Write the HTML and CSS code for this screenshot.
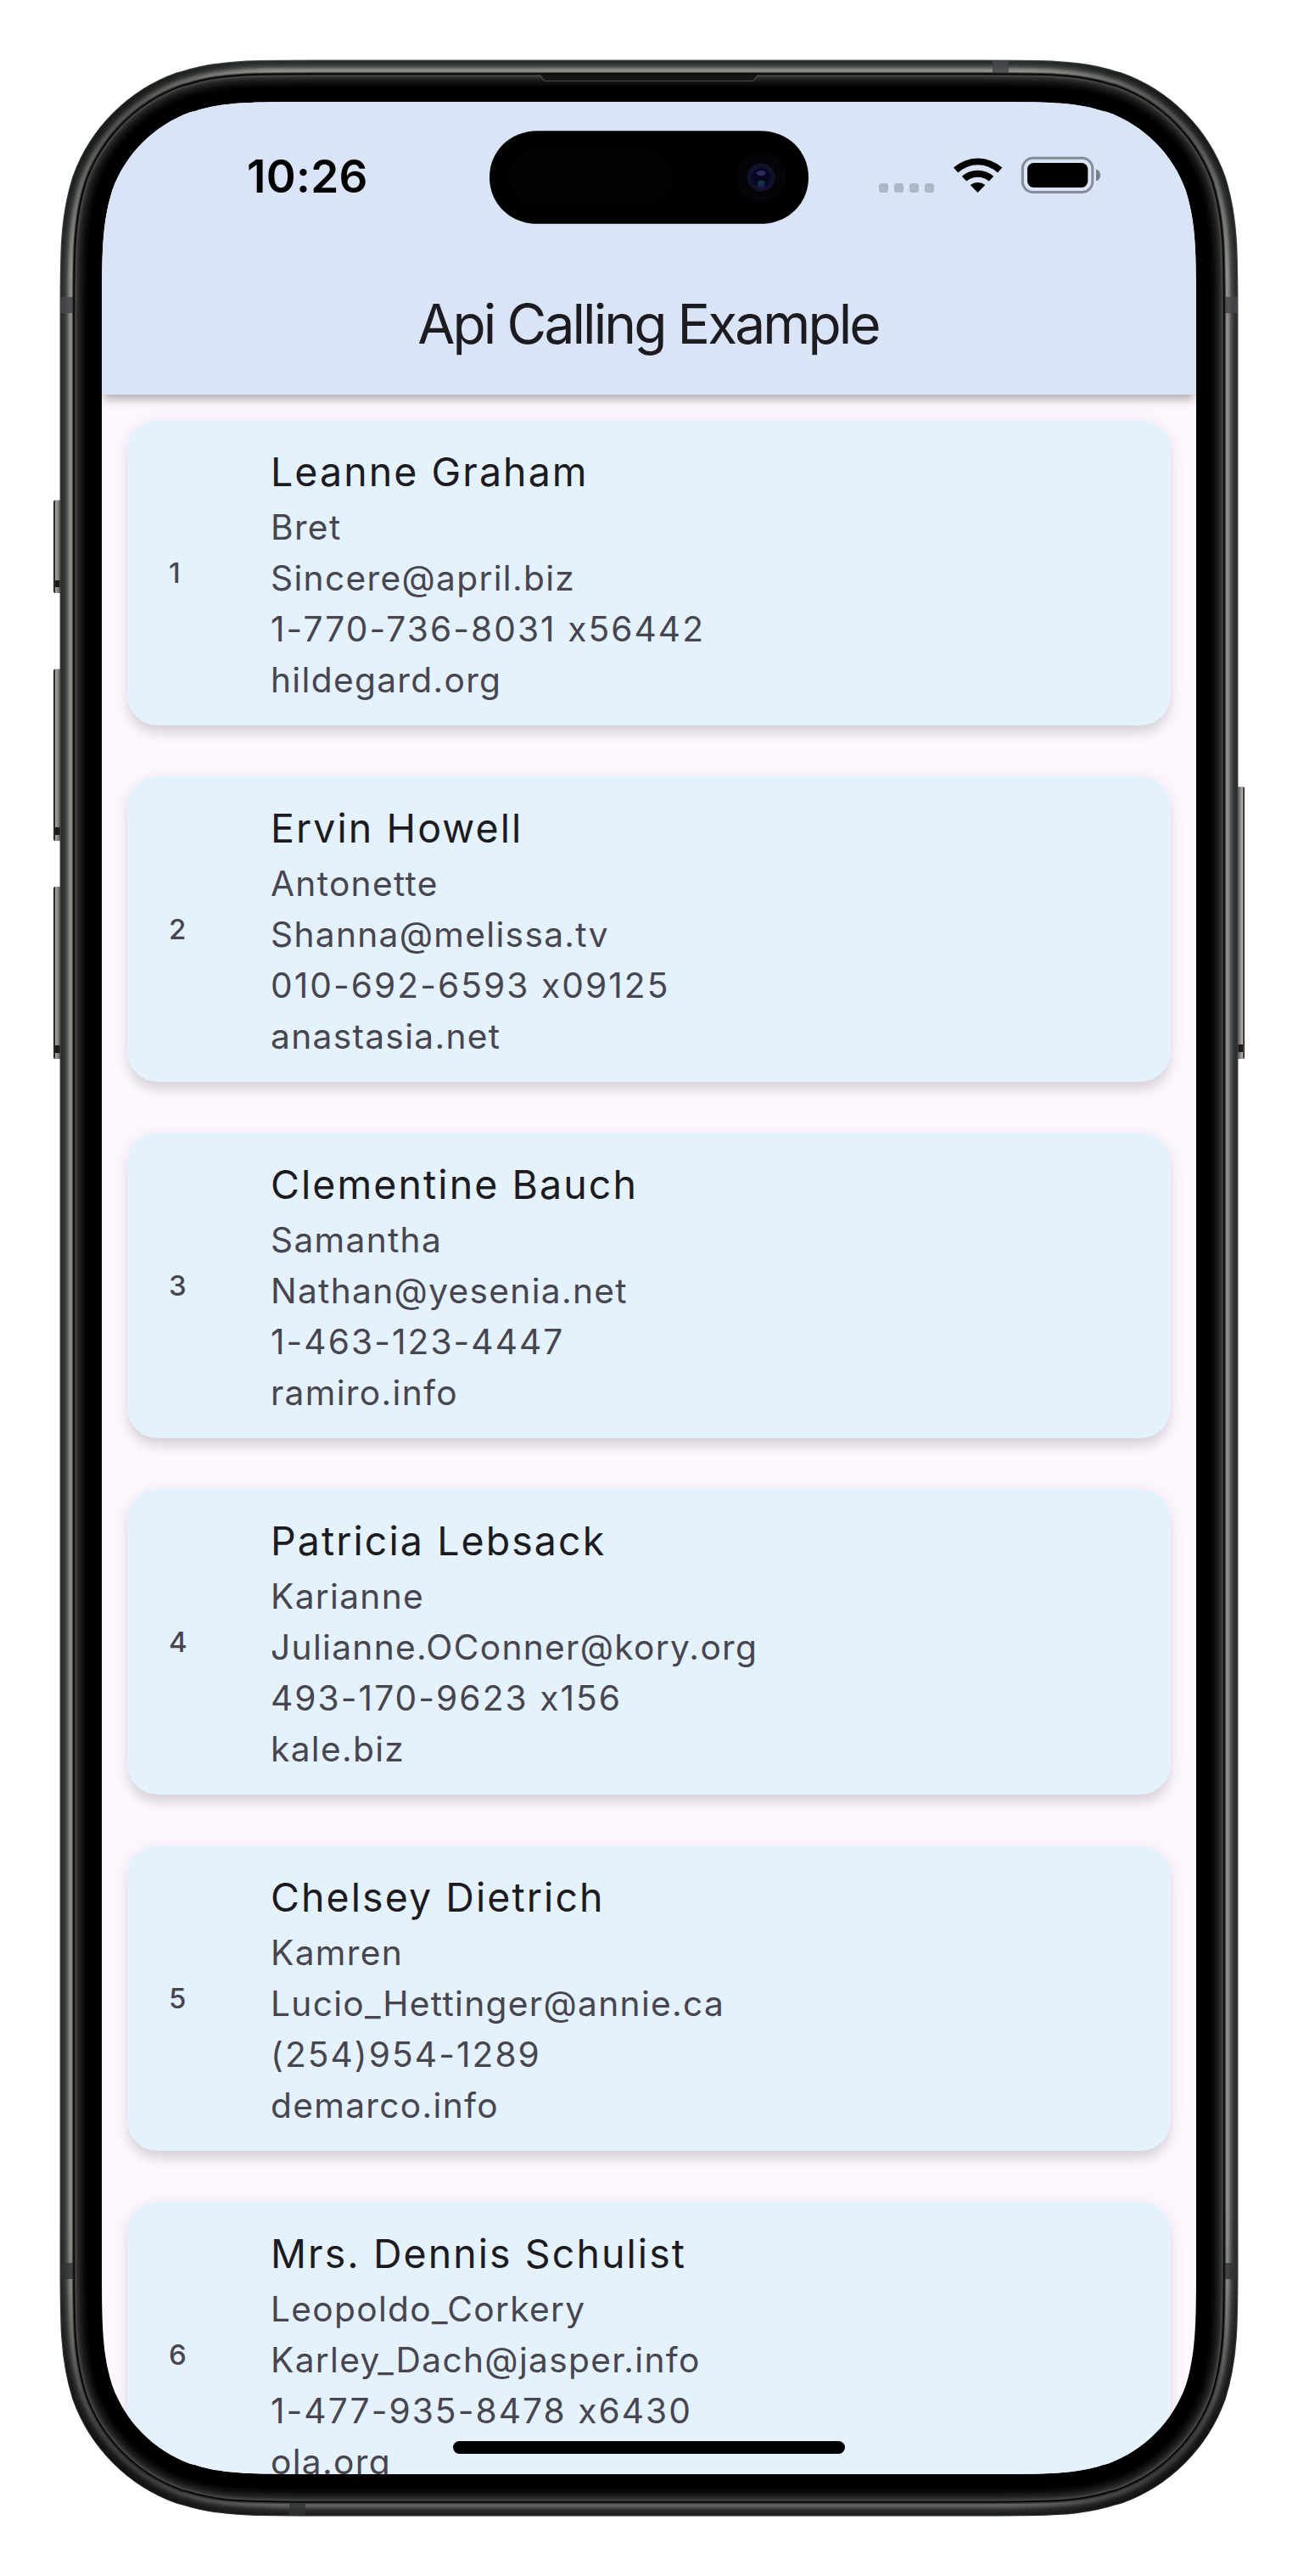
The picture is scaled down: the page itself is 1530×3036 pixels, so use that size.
FILE: index.html
```html
<!DOCTYPE html>
<html lang="en">
<head>
<meta charset="utf-8">
<title>Api Calling Example</title>
<link rel="stylesheet" href="styles.css">
</head>
<body>
<div class="device">
  <svg class="frame" viewBox="0 0 1530 3036" aria-hidden="true">
    <defs>
      <path id="outline" d="M372.23 120H1157.77C1230.4 120 1266.71 120 1299.46 130.81L1305.8 132.36C1348.48 147.89 1382.11 181.52 1397.64 224.2C1410 263.29 1410 299.6 1410 372.23V2663.77C1410 2736.4 1410 2772.71 1397.64 2811.8C1382.11 2854.48 1348.48 2888.11 1305.8 2903.64L1299.46 2905.19C1266.71 2916 1230.4 2916 1157.77 2916H372.23C299.6 2916 263.29 2916 230.54 2905.19L224.2 2903.64C181.52 2888.11 147.89 2854.48 132.36 2811.8C120 2772.71 120 2736.4 120 2663.77V372.23C120 299.6 120 263.29 132.36 224.2C147.89 181.52 181.52 147.89 224.2 132.36L230.54 130.81C263.29 120 299.6 120 372.23 120Z"/>
      <radialGradient id="tl" gradientUnits="userSpaceOnUse" cx="115" cy="115" r="210"><stop offset=".2" stop-opacity=".42"/><stop offset="1" stop-opacity="0"/></radialGradient>
      <radialGradient id="tr" gradientUnits="userSpaceOnUse" cx="1415" cy="115" r="210"><stop offset=".2" stop-opacity=".42"/><stop offset="1" stop-opacity="0"/></radialGradient>
      <radialGradient id="bl" gradientUnits="userSpaceOnUse" cx="115" cy="2921" r="230"><stop offset=".2" stop-opacity=".45"/><stop offset="1" stop-opacity="0"/></radialGradient>
      <radialGradient id="br" gradientUnits="userSpaceOnUse" cx="1415" cy="2921" r="230"><stop offset=".2" stop-opacity=".45"/><stop offset="1" stop-opacity="0"/></radialGradient>
      <linearGradient id="low" gradientUnits="userSpaceOnUse" x1="0" y1="2600" x2="0" y2="2960"><stop offset="0" stop-opacity="0"/><stop offset="1" stop-opacity=".32"/></linearGradient>
      <linearGradient id="key" x1="0" y1="0" x2="1" y2="0"><stop offset="0" stop-color="#2b2a28"/><stop offset=".15" stop-color="#2b2a28"/><stop offset=".22" stop-color="#a3a19c"/><stop offset=".5" stop-color="#8b8984"/><stop offset="1" stop-color="#32312f"/></linearGradient>
      <linearGradient id="keyr" x1="1" y1="0" x2="0" y2="0"><stop offset="0" stop-color="#2b2a28"/><stop offset=".13" stop-color="#2b2a28"/><stop offset=".22" stop-color="#b5b3ae"/><stop offset=".5" stop-color="#8b8984"/><stop offset="1" stop-color="#32312f"/></linearGradient>
    </defs>
    <g class="keys">
      <rect x="63" y="589.5" width="10" height="109.5" rx="2" fill="url(#key)"/>
      <rect x="63" y="788.5" width="10" height="202.5" rx="2" fill="url(#key)"/>
      <rect x="63" y="1045" width="10" height="203" rx="2" fill="url(#key)"/>
      <rect x="1457" y="927.3" width="10" height="320.7" rx="2" fill="url(#keyr)"/>
      <path d="M65 684h6v8h-6zM65 975h6v9h-6zM65 1232h6v9h-6zM1459 1231h6v9h-6z" fill="#1d1c1b"/>
    </g>
    <g fill="none">
      <use href="#outline" stroke="#4c4f4f" stroke-width="99"/>
      <use href="#outline" stroke="#292d2f" stroke-width="97"/>
      <use href="#outline" stroke="#303435" stroke-width="92"/>
      <use href="#outline" stroke="#3e4142" stroke-width="88"/>
      <use href="#outline" stroke="#505151" stroke-width="84"/>
      <use href="#outline" stroke="#6c6b69" stroke-width="81"/>
      <use href="#outline" stroke="#878581" stroke-width="78"/>
      <use href="#outline" stroke="#94928d" stroke-width="74"/>
      <use href="#outline" stroke="#6b6a68" stroke-width="70.5"/>
      <use href="#outline" stroke="url(#tl)" stroke-width="99"/>
      <use href="#outline" stroke="url(#tr)" stroke-width="99"/>
      <use href="#outline" stroke="url(#bl)" stroke-width="99"/>
      <use href="#outline" stroke="url(#br)" stroke-width="99"/>
      <use href="#outline" stroke="url(#low)" stroke-width="99"/>
      <path d="M71 359.5h15M1444 359.5h15M1179.5 71v15" stroke="#45484b" stroke-opacity=".85" stroke-width="19"/>
      <path d="M71 2676.5h15M1444 2676.5h15M350.5 2950v15" stroke="#303335" stroke-opacity=".8" stroke-width="19"/>
      <use href="#outline" stroke="#2c2c2c" stroke-width="69"/>
      <use href="#outline" stroke="#060606" stroke-width="67"/>
      <use href="#outline" stroke="#444" stroke-width="63.5"/>
      <use href="#outline" stroke="#343434" stroke-width="60"/>
      <use href="#outline" stroke="#272727" stroke-width="57"/>
      <use href="#outline" stroke="#1d1d1d" stroke-width="53"/>
      <use href="#outline" stroke="#141414" stroke-width="49"/>
      <use href="#outline" stroke="#0b0b0b" stroke-width="44"/>
      <use href="#outline" stroke="#050505" stroke-width="39"/>
      <use href="#outline" stroke="#000" stroke-width="34"/>
    </g>
    <path d="M636 88.500C640 88.500 638 95.500 644 95.500H886C892 95.500 890 88.500 894 88.500" fill="#161616" stroke="#4b4b4b" stroke-width="1.200"/>
    <path d="M637 87.500H893" stroke="#0b0b0b" stroke-width="2.500"/>
  </svg>

  <main class="screen">
    <header class="appbar">
      <div class="status">
        <span class="clock">10:26</span>
        <svg class="indicators" viewBox="1030 180 270 52" width="270" height="52" aria-hidden="true">
          <g fill="#adb7c5"><rect x="1036" y="216" width="11" height="11" rx="3"/><rect x="1054" y="216" width="11" height="11" rx="3"/><rect x="1072" y="216" width="11" height="11" rx="3"/><rect x="1090" y="216" width="11" height="11" rx="3"/></g>
          <path d="M1124 197.500A43 43 0 0 1 1181.300 197.500L1176 203.400A34.500 34.500 0 0 0 1129.300 203.400ZM1133.800 207.800A28 28 0 0 1 1171.200 207.800L1165.800 213.600A20.500 20.500 0 0 0 1139.200 213.600ZM1143.700 218A14 14 0 0 1 1161.300 218L1152.500 227Z"/>
          <rect x="1205.300" y="186.300" width="82.500" height="40.200" rx="12.500" fill="none" stroke="#858c98" stroke-width="3"/>
          <rect x="1211" y="192" width="71.300" height="29" rx="7.500"/>
          <path d="M1292 199.500C1295 200.500 1297 203 1297 206.500C1297 210 1295 212.500 1292 213.500Z" fill="#767d87"/>
        </svg>
        <svg class="island" viewBox="0 0 377 110" aria-hidden="true">
          <path d="M57 0H320C353 0 377 24 377 55S353 110 320 110H57C24 110 0 86 0 55S24 0 57 0Z"/>
          <rect x="23" y="22" width="194" height="66" rx="33" fill="#030303"/>
          <circle cx="321" cy="55" r="30" fill="#060408"/>
          <circle cx="321" cy="55" r="16.300" fill="#12132a"/>
          <circle cx="321" cy="55" r="11.500" fill="#05051c" stroke="#0c0c38" stroke-width="2"/>
          <ellipse cx="321" cy="50" rx="5.500" ry="3" fill="#2b2d60"/>
          <ellipse cx="321" cy="62" rx="4.500" ry="3.500" fill="#0e363d"/>
          <path d="M317 65.500Q321 68 325 65.500" stroke="#3c1064" stroke-width="2" fill="none"/>
        </svg>
      </div>
      <h1 class="title">Api Calling Example</h1>
    </header>

    <ul class="users">
      <li class="card"><span class="index">1</span><div class="info"><h2>Leanne Graham</h2><p>Bret</p><p>Sincere@april.biz</p><p class="phone">1-770-736-8031 x56442</p><p>hildegard.org</p></div></li>
      <li class="card"><span class="index">2</span><div class="info"><h2>Ervin Howell</h2><p>Antonette</p><p>Shanna@melissa.tv</p><p class="phone">010-692-6593 x09125</p><p>anastasia.net</p></div></li>
      <li class="card"><span class="index">3</span><div class="info"><h2>Clementine Bauch</h2><p>Samantha</p><p>Nathan@yesenia.net</p><p class="phone">1-463-123-4447</p><p>ramiro.info</p></div></li>
      <li class="card"><span class="index">4</span><div class="info"><h2>Patricia Lebsack</h2><p>Karianne</p><p>Julianne.OConner@kory.org</p><p class="phone">493-170-9623 x156</p><p>kale.biz</p></div></li>
      <li class="card"><span class="index">5</span><div class="info"><h2>Chelsey Dietrich</h2><p>Kamren</p><p>Lucio_Hettinger@annie.ca</p><p class="phone">(254)954-1289</p><p>demarco.info</p></div></li>
      <li class="card"><span class="index">6</span><div class="info"><h2>Mrs. Dennis Schulist</h2><p>Leopoldo_Corkery</p><p>Karley_Dach@jasper.info</p><p class="phone">1-477-935-8478 x6430</p><p>ola.org</p></div></li>
    </ul>
    <div class="home-indicator"></div>
  </main>
</div>
</body>
</html>
```
FILE: styles.css
```css
* { box-sizing: border-box; }

body {
  margin: 0;
  background: #fff;
  font-family: Inter, "Liberation Sans", sans-serif;
  font-variant-ligatures: no-contextual;
  color: #1d1b20;
}

h1, h2, p, ul {
  margin: 0;
  padding: 0;
  font-weight: 400;
}

.device {
  position: relative;
  width: 1530px;
  height: 3036px;
  padding: 120px;
}

.frame {
  position: absolute;
  inset: 0;
  width: 100%;
  height: 100%;
}

.screen {
  position: relative;
  width: 1290px;
  height: 2796px;
  overflow: hidden;
  background: #fef7ff;
  clip-path: path("M252.23 0H1037.77C1110.4 0 1146.71 0 1179.46 10.81L1185.8 12.36C1228.48 27.89 1262.11 61.52 1277.64 104.2C1290 143.29 1290 179.6 1290 252.23V2543.77C1290 2616.4 1290 2652.71 1277.64 2691.8C1262.11 2734.48 1228.48 2768.11 1185.8 2783.64L1179.46 2785.19C1146.71 2796 1110.4 2796 1037.77 2796H252.23C179.6 2796 143.29 2796 110.54 2785.19L104.2 2783.64C61.52 2768.11 27.89 2734.48 12.36 2691.8C0 2652.71 0 2616.4 0 2543.77V252.23C0 179.6 0 143.29 12.36 104.2C27.89 61.52 61.52 27.89 104.2 12.36L110.54 10.81C143.29 0 179.6 0 252.23 0Z");
}

.appbar {
  position: relative;
  z-index: 1;
  height: 345px;
  background: #d9e4f6;
  box-shadow: 0 8px 9px -3px rgba(0, 0, 0, .22), 0 5px 16px rgba(0, 0, 0, .13);
}

.status {
  position: relative;
  display: flex;
  align-items: center;
  justify-content: space-between;
  height: 172px;
  padding: 0 110px 0 171px;
}

.clock {
  padding-top: 3px;
  font-size: 53px;
  font-weight: 600;
  line-height: 64px;
  letter-spacing: .3px;
  color: #000;
}

.indicators { display: block; }

.island {
  position: absolute;
  left: 457px;
  top: 34px;
  width: 376px;
  height: 110px;
}

.title {
  padding: 6px 2px 0 0;
  font-size: 64px;
  line-height: 168px;
  letter-spacing: -2.9px;
  text-align: center;
}

.users {
  display: flex;
  flex-direction: column;
  gap: 60px;
  padding: 30px;
  list-style: none;
}

.card {
  display: flex;
  align-items: center;
  height: 360px;
  flex: none;
  padding-left: 49px;
  border-radius: 36px;
  background: #e3f2fd;
  box-shadow: 0 12px 12px -2px rgba(0, 0, 0, .09), 0 4px 22px rgba(0, 0, 0, .09);
}

.index {
  width: 120px;
  font-size: 33px;
  line-height: 48px;
  font-weight: 450;
  color: #49454f;
}

.info {
  align-self: flex-start;
  padding-top: 26px;
}

.info h2 {
  font-size: 46.5px;
  font-weight: 380;
  line-height: 71px;
  letter-spacing: 2.07px;
}

.info p {
  font-size: 40.7px;
  font-weight: 370;
  line-height: 60px;
  letter-spacing: 1.3px;
  color: #49454f;
}

.info .phone { letter-spacing: 2.05px; }

.home-indicator {
  position: absolute;
  left: 414px;
  top: 2757px;
  width: 462px;
  height: 15px;
  border-radius: 8px;
  background: #000;
}
```
